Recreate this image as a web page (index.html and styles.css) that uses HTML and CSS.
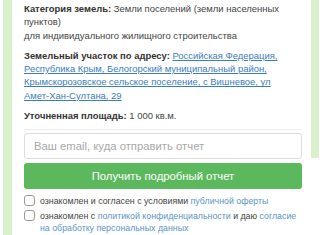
FILE: index.html
```html
<!DOCTYPE html>
<html lang="ru">
<head>
<meta charset="utf-8">
<link rel="stylesheet" href="styles.css">
</head>
<body>
<div class="page">
  <div class="band-left"></div>
  <div class="card">
    <p class="row"><b>Категория земель:</b> Земли поселений (земли населенных пунктов)<br>для индивидуального жилищного строительства</p>
    <p class="row"><b>Земельный участок по адресу:</b> <a class="addr" href="#">Российская Федерация, Республика Крым, Белогорский муниципальный район, Крымскорозовское сельское поселение, с Вишневое, ул <span class="nowrap">Амет-Хан-Султана,</span> 29</a></p>
    <p class="row"><b>Уточненная площадь:</b> 1 000 кв.м.</p>
    <div class="sep"></div>
    <input class="email" type="text" placeholder="Ваш email, куда отправить отчет">
    <button class="btn" type="button">Получить подробный отчет</button>
    <label class="check first"><span class="box"></span><span>ознакомлен и согласен с условиями <a href="#">публичной оферты</a></span></label>
    <label class="check"><span class="box"></span><span>ознакомлен с <a href="#">политикой конфиденциальности</a> и даю <a href="#">согласие на обработку персональных данных</a></span></label>
  </div>
  <div class="band-right"></div>
</div>
</body>
</html>
```
FILE: styles.css
```css
html, body {
  margin: 0;
  padding: 0;
  background: #ffffff;
}
body {
  font-family: "Liberation Sans", Arial, sans-serif;
  color: #333333;
  font-size: 9.45px;
}
.page {
  display: flex;
  align-items: flex-start;
  padding-left: 3px;
  padding-right: 7px;
  height: 235px;
  overflow: hidden;
}
.band-left {
  width: 9px;
  align-self: stretch;
  background: #d9f1cb;
}
.band-right {
  width: 8px;
  height: 158px;
  background: #d9f1cb;
}
.card {
  flex: 1;
  background: #ffffff;
  padding: 2px 9px 0 12px;
}
.row {
  margin: 0 0 7px 0;
  line-height: 13.3px;
  color: #444;
}
.row b {
  font-weight: bold;
  color: #333;
}
.addr {
  color: #3a7dbf;
  text-decoration: underline;
}
.nowrap {
  white-space: nowrap;
}
.sep {
  height: 1px;
  background: #eeeeee;
  margin: 4px 0 3px 0;
}
.email {
  display: block;
  box-sizing: border-box;
  width: 100%;
  height: 26px;
  border: 1px solid #dddddd;
  border-radius: 3px;
  padding: 0 9px;
  font-family: "Liberation Sans", Arial, sans-serif;
  font-size: 11.3px;
  color: #333;
  background: #fff;
  margin: 0;
}
.email::placeholder {
  color: #a8a8a8;
}
.btn {
  display: block;
  width: 100%;
  height: 26px;
  margin-top: 4px;
  border: none;
  border-radius: 3px;
  background: #5cb85c;
  color: #ffffff;
  font-family: "Liberation Sans", Arial, sans-serif;
  font-size: 11.3px;
  padding: 0;
}
.check {
  display: flex;
  align-items: flex-start;
  gap: 5px;
  font-size: 8.8px;
  line-height: 12.5px;
  color: #444;
  margin-top: 2px;
}
.check.first {
  margin-top: 6px;
}
.box {
  flex: none;
  box-sizing: border-box;
  width: 11px;
  height: 11px;
  margin-top: 0;
  border: 1px solid #999;
  border-radius: 3px;
  background: #fff;
}
.check a {
  color: #5b95c9;
  text-decoration: none;
}
```
